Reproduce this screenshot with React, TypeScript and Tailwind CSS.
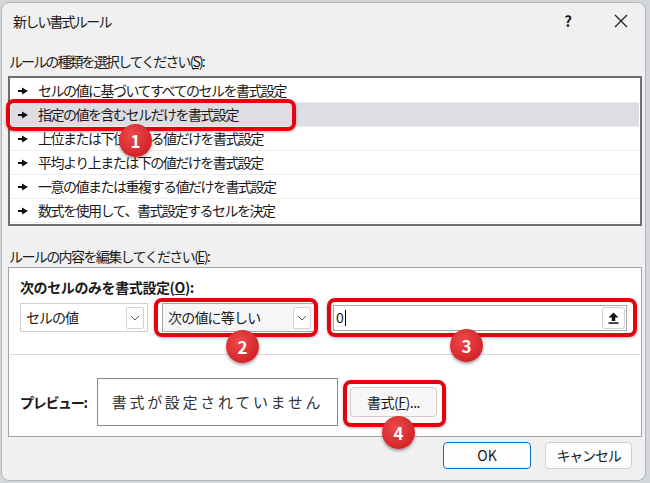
import React from "react";

const rules = [
  "セルの値に基づいてすべてのセルを書式設定",
  "指定の値を含むセルだけを書式設定",
  "上位または下位に入る値だけを書式設定",
  "平均より上または下の値だけを書式設定",
  "一意の値または重複する値だけを書式設定",
  "数式を使用して、書式設定するセルを決定",
];

function Pointer() {
  return (
    <svg width="10" height="8" viewBox="0 0 10 8" className="shrink-0">
      <rect x="0" y="3" width="5" height="2" fill="#111" />
      <path d="M4 0.5 L10 4 L4 7.5 Z" fill="#111" />
    </svg>
  );
}

function Chevron() {
  return (
    <span className="flex h-[22px] w-[18px] items-center justify-center rounded-[2px] border border-[#d4d4d4] bg-white">
      <svg width="10" height="6" viewBox="0 0 10 6">
        <path d="M1 1 L5 5 L9 1" fill="none" stroke="#555" strokeWidth="1" />
      </svg>
    </span>
  );
}

function Badge({ n, className }: { n: number; className: string }) {
  return (
    <div
      className={
        "absolute z-20 flex h-[33px] w-[33px] items-center justify-center rounded-full bg-[radial-gradient(circle_at_40%_35%,#ec4a4a,#c9161c)] text-[17px] font-bold text-white shadow-[0_2px_3px_rgba(0,0,0,0.35)] " +
        className
      }
    >
      {n}
    </div>
  );
}

function Frame({ className }: { className: string }) {
  return (
    <div
      className={
        "pointer-events-none absolute z-10 rounded-[8px] border-[4px] border-[#e8000e] bg-transparent shadow-[0_1px_3px_rgba(0,0,0,0.3)] " +
        className
      }
    />
  );
}

export default function App() {
  return (
    <div className="relative h-[483px] w-[650px] overflow-hidden bg-[#d3d6db] pl-[1px] pt-[2px] font-['Noto_Sans_CJK_JP','Noto_Sans',sans-serif] text-[#1a1a1a]">
      <div className="flex h-[479px] w-[645px] flex-col rounded-[8px] border border-[#b5b5b5] bg-[#f0f0f0]">
        {/* title bar */}
        <div className="flex h-[36px] shrink-0 items-center pl-[11px] pr-[17px]">
          <span className="text-[14px] tracking-[-1.8px]">新しい書式ルール</span>
          <span className="ml-auto mr-[42px] text-[15px] font-bold">?</span>
          <svg width="14" height="14" viewBox="0 0 14 14">
            <path d="M1 1 L13 13 M13 1 L1 13" stroke="#222" strokeWidth="1.3" />
          </svg>
        </div>

        <div className="mt-[12px] flex h-[20px] shrink-0 items-center pl-[7px] text-[14px] tracking-[-1.9px]">
          ルールの種類を選択してください(<span className="underline">S</span>):
        </div>

        {/* rule list */}
        <div className="ml-[6px] mt-[5px] h-[150px] w-[634px] shrink-0 border-2 border-[#6e6e6e] bg-white px-[1px] pt-[1px]">
          {rules.map((r, i) => (
            <div
              key={r}
              className={
                "flex h-[24px] items-center gap-[10px] border-b border-[#ececec] pl-[7px] text-[14px] tracking-[-1.5px] " +
                (i === 1 ? "bg-[#dedee2]" : "")
              }
            >
              <Pointer />
              <span>{r}</span>
            </div>
          ))}
        </div>

        <div className="mt-[20px] flex h-[20px] shrink-0 items-center pl-[7px] text-[14px] tracking-[-1.6px]">
          ルールの内容を編集してください(<span className="underline">E</span>):
        </div>

        {/* rule editor panel */}
        <div className="ml-[6px] mt-[1px] h-[170px] w-[634px] shrink-0 border border-[#a3a3a3] bg-white">
          <div className="px-[11px] pt-[9px]">
            <div className="flex h-[20px] items-center text-[14px] font-bold tracking-[-0.4px]">
              次のセルのみを書式設定(<span className="underline">O</span>):
            </div>
            <div className="mt-[6px] flex h-[29px] items-center">
              <div className="flex h-[29px] w-[128px] items-center justify-between border border-[#cfcfcf] bg-white pl-[5px] pr-[3px] text-[14px] tracking-[-1px]">
                <span>セルの値</span>
                <Chevron />
              </div>
              <div className="ml-[14px] flex h-[29px] w-[153px] items-center justify-between border border-[#a8a8a8] bg-[#f6f6f6] pl-[5px] pr-[3px] text-[14px] tracking-[-0.8px]">
                <span>次の値に等しい</span>
                <Chevron />
              </div>
              <div className="ml-[18px] flex h-[26px] w-[294px] items-center justify-between border border-[#a8a8a8] bg-white pl-[2px] pr-[1px]">
                <span className="flex items-center text-[14px]">
                  0<span className="ml-[1px] h-[16px] w-[1px] bg-black" />
                </span>
                <span className="flex h-[22px] w-[23px] items-center justify-center rounded-[3px] border border-[#d0d0d0] bg-white">
                  <svg width="11" height="12" viewBox="0 0 11 12">
                    <path d="M5.5 0.5 L10.5 5.5 L7.2 5.5 L7.2 9 L3.8 9 L3.8 5.5 L0.5 5.5 Z" fill="#111" />
                    <rect x="0.5" y="10.3" width="10" height="1.5" fill="#111" />
                  </svg>
                </span>
              </div>
            </div>
          </div>
          <div className="mx-[1px] mt-[22px] h-[1px] bg-[#d9d9d9]" />
          <div className="mt-[23px] flex items-center pl-[11px]">
            <span className="w-[77px] text-[14px] font-bold tracking-[-1.3px]">プレビュー:</span>
            <div className="flex h-[48px] w-[241px] items-center justify-center border border-[#8a8a8a] bg-white text-[15px] tracking-[2.7px] text-[#333]">
              書式が設定されていません
            </div>
            <button className="ml-[12px] flex h-[30px] w-[87px] items-center justify-center rounded-[4px] border border-[#cdcdcd] bg-[#f7f7f7] text-[14px] tracking-[-0.5px]">
              書式(<span className="underline">F</span>)...
            </button>
          </div>
        </div>

        {/* dialog buttons */}
        <div className="mt-[5px] flex shrink-0 justify-end gap-[14px] pr-[13px]">
          <button className="flex h-[27px] w-[88px] items-center justify-center rounded-[4px] border border-[#0f6cbd] bg-[#fdfdfd] text-[14px]">
            OK
          </button>
          <button className="flex h-[27px] w-[87px] items-center justify-center rounded-[4px] border border-[#d0d0d0] bg-[#fdfdfd] text-[14px] tracking-[-1.2px]">
            キャンセル
          </button>
        </div>
      </div>

      {/* annotations */}
      <Frame className="left-[6px] top-[99px] h-[32px] w-[290px]" />
      <Badge n={1} className="left-[119px] top-[124px]" />
      <Frame className="left-[154px] top-[298px] h-[39px] w-[164px]" />
      <Badge n={2} className="left-[226px] top-[330px]" />
      <Frame className="left-[327px] top-[298px] h-[39px] w-[310px]" />
      <Badge n={3} className="left-[450px] top-[329px]" />
      <Frame className="left-[343px] top-[380px] h-[47px] w-[103px]" />
      <Badge n={4} className="left-[382px] top-[416px]" />
    </div>
  );
}
